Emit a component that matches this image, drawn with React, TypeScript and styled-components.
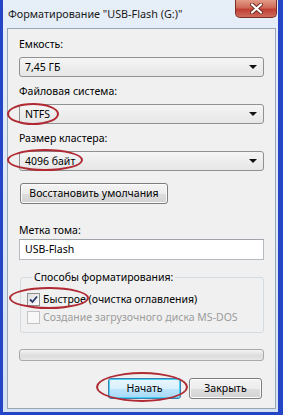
import styled, { createGlobalStyle } from 'styled-components'

const GlobalStyle = createGlobalStyle`
  html, body {
    margin: 0;
    padding: 0;
    background: #2446c6;
  }
  body {
    font-family: "Noto Sans", "Open Sans", sans-serif;
    font-size: 10.5px;
    color: #000;
  }
`

interface Mark {
  x: number
  y: number
  w: number
  h: number
}

const MARKS: Mark[] = [
  { x: 7, y: 103, w: 52, h: 22 },
  { x: 7, y: 149, w: 76, h: 22 },
  { x: 9, y: 287, w: 80, h: 22 },
  { x: 96, y: 372, w: 92, h: 30 },
]

function Select({ value }: { value: string }) {
  return (
    <SelectBox>
      <span>{value}</span>
      <Arrow />
    </SelectBox>
  )
}

export default function App() {
  return (
    <>
      <GlobalStyle />
      <Window>
        <TitleBar>
          <Title>Форматирование "USB-Flash (G:)"</Title>
          <CloseButton>
            <svg width="13" height="11" viewBox="0 0 13 11">
              <path
                d="M2 1.5 L11 9.5 M11 1.5 L2 9.5"
                stroke="#6b2a22"
                strokeWidth="4"
                strokeLinecap="round"
              />
              <path
                d="M2 1.5 L11 9.5 M11 1.5 L2 9.5"
                stroke="#ffffff"
                strokeWidth="2.2"
                strokeLinecap="round"
              />
            </svg>
          </CloseButton>
        </TitleBar>
        <Panel>
          <Label>Емкость:</Label>
          <Select value="7,45 ГБ" />
          <Label $gap={7}>Файловая система:</Label>
          <Select value="NTFS" />
          <Label $gap={7}>Размер кластера:</Label>
          <Select value="4096 байт" />
          <RestoreButton>Восстановить умолчания</RestoreButton>
          <Label $gap={19}>Метка тома:</Label>
          <TextInput>USB-Flash</TextInput>
          <Group>
            <Legend>Способы форматирования:</Legend>
            <CheckRow>
              <CheckBox $checked>
                <svg width="9" height="9" viewBox="0 0 9 9">
                  <path d="M1 4.5 L3.5 7 L8 1.5" fill="none" stroke="#2a3a6a" strokeWidth="1.8" />
                </svg>
              </CheckBox>
              Быстрое (очистка оглавления)
            </CheckRow>
            <CheckRow $disabled>
              <CheckBox />
              Создание загрузочного диска MS-DOS
            </CheckRow>
          </Group>
          <Progress />
          <ButtonRow>
            <DialogButton $primary>Начать</DialogButton>
            <DialogButton>Закрыть</DialogButton>
          </ButtonRow>
        </Panel>
        {MARKS.map((m, i) => (
          <Ellipse key={i} $x={m.x} $y={m.y} $w={m.w} $h={m.h} />
        ))}
      </Window>
    </>
  )
}

const Window = styled.div`
  position: relative;
  width: 283px;
  height: 415px;
  box-sizing: border-box;
  border-left: 3px solid #2446c6;
  border-right: 5px solid #2446c6;
  border-bottom: 3px solid #2446c6;
  padding: 0 2px 3px 4px;
  background: linear-gradient(#e6eef8, #d4e2f2);
  display: flex;
  flex-direction: column;
`

const TitleBar = styled.div`
  height: 28px;
  display: flex;
  justify-content: space-between;
  align-items: flex-start;
`

const Title = styled.div`
  margin: 6px 0 0 1px;
  font-size: 10.8px;
  line-height: 16px;
  color: #1a1a1a;
  white-space: nowrap;
`

const CloseButton = styled.div`
  width: 42px;
  height: 18px;
  box-sizing: border-box;
  margin-right: -1px;
  border: 1px solid #7a2f2a;
  border-top: none;
  border-radius: 0 0 5px 5px;
  background: linear-gradient(#e39a88 0%, #d06a58 45%, #bf3f33 55%, #cf6a5c 100%);
  display: flex;
  align-items: center;
  justify-content: center;
`

const Panel = styled.div`
  flex: 1;
  border: 1px solid #98a6b6;
  background: #f0f0f0;
  padding: 8px 11px 0;
  display: flex;
  flex-direction: column;
  align-items: stretch;
`

const Label = styled.div<{ $gap?: number }>`
  margin-top: ${({ $gap }) => $gap ?? 0}px;
  line-height: 15px;
  white-space: nowrap;
`

const SelectBox = styled.div`
  margin-top: 5px;
  height: 20px;
  box-sizing: border-box;
  border: 1px solid #8f9193;
  border-radius: 3px;
  background: linear-gradient(#f5f5f5, #e6e6e6);
  padding: 0 6px 0 5px;
  display: flex;
  align-items: center;
  justify-content: space-between;
  line-height: 15px;
`

const Arrow = styled.div`
  width: 0;
  height: 0;
  border-left: 4px solid transparent;
  border-right: 4px solid transparent;
  border-top: 4px solid #111;
`

const ButtonBase = styled.div`
  height: 21px;
  box-sizing: border-box;
  border: 1px solid #7d7d7d;
  border-radius: 3px;
  background: linear-gradient(#f4f4f4 0%, #ececec 50%, #dedede 51%, #d2d2d2 100%);
  box-shadow: inset 0 0 0 1px #fbfbfb;
  display: flex;
  align-items: center;
  justify-content: center;
  line-height: 15px;
  white-space: nowrap;
`

const RestoreButton = styled(ButtonBase)`
  margin: 12px 0 0 1px;
  width: 148px;
`

const TextInput = styled.div`
  margin-top: 1px;
  height: 21px;
  box-sizing: border-box;
  border: 1px solid #b5bac1;
  border-top-color: #a0a4aa;
  background: #fff;
  padding: 0 5px;
  display: flex;
  align-items: center;
  line-height: 15px;
`

const Group = styled.fieldset`
  margin: 10px 0 0 1px;
  padding: 6px 6px 7px;
  border: 1px solid #d3dbe0;
  border-radius: 3px;
  display: flex;
  flex-direction: column;
  gap: 2px;
  min-width: 0;
`

const Legend = styled.legend`
  margin-left: 5px;
  padding: 0 2px;
  line-height: 15px;
`

const CheckRow = styled.div<{ $disabled?: boolean }>`
  height: 16px;
  display: flex;
  align-items: center;
  gap: 3px;
  white-space: nowrap;
  color: ${({ $disabled }) => ($disabled ? '#9c9c9c' : '#000')};
`

const CheckBox = styled.div<{ $checked?: boolean }>`
  width: 13px;
  height: 13px;
  box-sizing: border-box;
  flex: none;
  border: 1px solid ${({ $checked }) => ($checked ? '#8e8f8f' : '#c4c4c4')};
  background: ${({ $checked }) =>
    $checked ? 'linear-gradient(135deg, #dcdcdc, #ffffff)' : '#f7f7f7'};
  display: flex;
  align-items: center;
  justify-content: center;
`

const Progress = styled.div`
  margin-top: 16px;
  height: 12px;
  box-sizing: border-box;
  border: 1px solid #a9a9a9;
  border-radius: 3px;
  background: linear-gradient(#f3f3f3, #dcdcdc 60%, #e8e8e8);
`

const ButtonRow = styled.div`
  margin-top: 17px;
  padding-right: 2px;
  display: flex;
  justify-content: flex-end;
  gap: 8px;
`

const DialogButton = styled(ButtonBase)<{ $primary?: boolean }>`
  width: 73px;
  ${({ $primary }) =>
    $primary &&
    `
    border-color: #3c7fb1;
    background: linear-gradient(#eaf6fd 0%, #d9f0fc 50%, #bee6fd 51%, #a7d9f5 100%);
    box-shadow: inset 0 0 0 1px #48d0f5;
  `}
`

const Ellipse = styled.div<{ $x: number; $y: number; $w: number; $h: number }>`
  position: absolute;
  left: ${({ $x }) => $x - 3}px;
  top: ${({ $y }) => $y}px;
  width: ${({ $w }) => $w}px;
  height: ${({ $h }) => $h}px;
  box-sizing: border-box;
  border: 2.5px solid #b02a33;
  border-radius: 50%;
  pointer-events: none;
`
